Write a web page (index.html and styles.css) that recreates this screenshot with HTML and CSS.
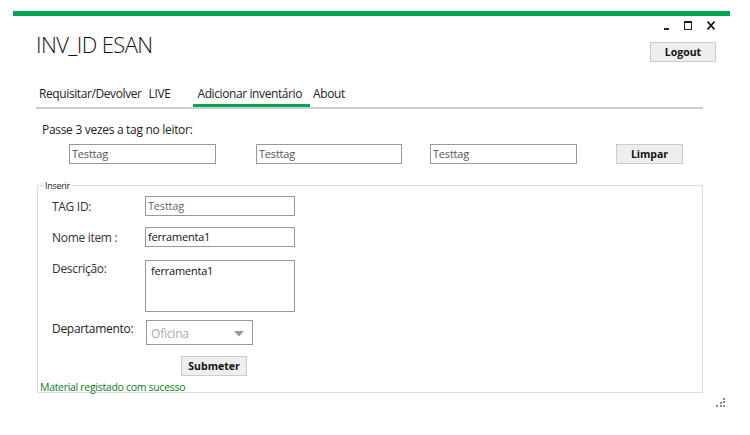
FILE: index.html
```html
<!DOCTYPE html>
<html lang="pt">
<head>
<meta charset="utf-8">
<title>INV_ID ESAN</title>
<link rel="stylesheet" href="styles.css">
</head>
<body>
<div class="window">
  <div class="header">
    <h1 class="title">INV_ID ESAN</h1>
    <div class="header-right">
      <div class="controls">
        <span class="ctl-min"></span>
        <span class="ctl-max"></span>
        <svg class="ctl-close" width="8" height="9" viewBox="0 0 8 9"><path d="M0.5 0.5 L7.5 8.5 M7.5 0.5 L0.5 8.5" stroke="#111" stroke-width="1.6" fill="none"/></svg>
      </div>
      <button class="btn btn-logout">Logout</button>
    </div>
  </div>

  <div class="content">
    <nav class="tabs">
      <span class="tab tab-req">Requisitar/Devolver</span>
      <span class="tab tab-live">LIVE</span>
      <span class="tab tab-add active">Adicionar inventário</span>
      <span class="tab tab-about">About</span>
    </nav>

    <p class="hint">Passe 3 vezes a tag no leitor:</p>
    <div class="tag-row">
      <div class="field f1">Testtag</div>
      <div class="field f2">Testtag</div>
      <div class="field f3">Testtag</div>
      <button class="btn btn-limpar">Limpar</button>
    </div>

    <div class="group">
      <span class="legend">Inserir</span>
      <div class="row row-tag">
        <span class="label">TAG ID:</span>
        <div class="field wide muted">Testtag</div>
      </div>
      <div class="row row-nome">
        <span class="label">Nome item :</span>
        <div class="field wide dark">ferramenta1</div>
      </div>
      <div class="row row-desc">
        <span class="label">Descrição:</span>
        <div class="field area dark">ferramenta1</div>
      </div>
      <div class="row row-dep">
        <span class="label label-dep">Departamento:</span>
        <div class="select">
          <span>Oficina</span>
          <svg width="10" height="6" viewBox="0 0 10 6"><path d="M0 0 H10 L5 5.5 Z" fill="#999"/></svg>
        </div>
      </div>
      <div class="row-submit">
        <button class="btn btn-submit">Submeter</button>
      </div>
      <p class="msg">Material registado com sucesso</p>
    </div>
  </div>

  <svg class="grip" width="10" height="10" viewBox="0 0 10 10">
    <rect x="7" y="0" width="2" height="2" fill="#888"/>
    <rect x="7" y="3" width="2" height="2" fill="#888"/>
    <rect x="4" y="4" width="2" height="2" fill="#888"/>
    <rect x="0" y="7" width="2" height="2" fill="#888"/>
    <rect x="4" y="7" width="2" height="2" fill="#888"/>
    <rect x="7" y="7" width="2" height="2" fill="#888"/>
  </svg>
</div>
</body>
</html>
```

FILE: styles.css
```css
html, body {
  margin: 0;
  padding: 0;
  background: #fff;
}
body {
  width: 750px;
  height: 435px;
  padding-top: 11px;
  box-sizing: border-box;
  font-family: "Open Sans", "Noto Sans", sans-serif;
  color: #222;
  overflow: hidden;
}
.window {
  position: relative;
  margin-left: 13px;
  width: 717px;
  height: 424px;
  border-top: 5px solid #00a651;
  box-sizing: border-box;
}
.header {
  display: flex;
  justify-content: space-between;
  padding-left: 23px;
  padding-right: 14px;
}
.title {
  margin: 13px 0 0 0;
  font-weight: 300;
  font-size: 22px;
  line-height: 30px;
  color: #111;
  letter-spacing: -0.6px;
}
.header-right {
  display: flex;
  flex-direction: column;
  align-items: flex-end;
}
.controls {
  display: flex;
  align-items: flex-end;
  height: 9px;
  margin-top: 5px;
  padding-right: 1px;
}
.ctl-min {
  width: 5px;
  height: 2px;
  background: #222;
  margin-right: 15px;
}
.ctl-max {
  width: 8px;
  height: 9px;
  box-sizing: border-box;
  border: 1px solid #222;
  border-top-width: 2px;
  margin-right: 15px;
}
.ctl-close {
  display: block;
}
.btn {
  font-family: "Open Sans", "Noto Sans", sans-serif;
  font-weight: 700;
  font-size: 10.5px;
  color: #111;
  background: #eeeeee;
  border: 1px solid #cccccc;
  padding: 0;
  height: 20px;
  box-sizing: border-box;
}
.btn-logout {
  width: 66px;
  margin-top: 12px;
}
.content {
  margin-left: 23px;
  width: 667px;
}
.tabs {
  display: flex;
  margin-top: 21px;
  height: 24px;
  border-bottom: 2px solid #cccccc;
  font-size: 12px;
  color: #222;
}
.tab {
  line-height: 17px;
  padding: 2px 0 0 0;
  letter-spacing: -0.4px;
  box-sizing: border-box;
}
.tab-req { margin-left: 3px; }
.tab-live { margin-left: 7px; }
.tab-add { margin-left: 23px; }
.tab-about { margin-left: 3px; }
.tab.active {
  padding: 2px 8px 0 4px;
  border-bottom: 3px solid #00a651;
  margin-bottom: -2px;
  height: 24px;
}
.hint {
  margin: 13px 0 0 6px;
  font-size: 12px;
  line-height: 16px;
  color: #222;
  letter-spacing: -0.3px;
}
.tag-row {
  display: flex;
  margin-top: 6px;
}
.field {
  height: 20px;
  box-sizing: border-box;
  border: 1px solid #999999;
  font-size: 11px;
  line-height: 17px;
  padding-left: 2px;
  color: #555;
  letter-spacing: -0.2px;
}
.f1 { width: 147px; margin-left: 33px; }
.f2 { width: 146px; margin-left: 40px; }
.f3 { width: 147px; margin-left: 28px; }
.btn-limpar { width: 67px; margin-left: 39px; }
.group {
  position: relative;
  margin-top: 21px;
  margin-left: 1px;
  width: 666px;
  height: 208px;
  box-sizing: border-box;
  border: 1px solid #dddddd;
}
.legend {
  position: absolute;
  top: -6px;
  left: 6px;
  padding: 0 1px;
  background: #fff;
  font-size: 9px;
  line-height: 11px;
  color: #222;
  letter-spacing: -0.3px;
}
.row {
  display: flex;
  padding-left: 14px;
}
.label {
  width: 93px;
  font-size: 12px;
  line-height: 16px;
  color: #333;
  letter-spacing: -0.3px;
}
.row-tag { margin-top: 10px; }
.row-tag .label { margin-top: 3px; }
.row-nome { margin-top: 11px; }
.row-nome .label { margin-top: 3px; }
.row-desc { margin-top: 13px; }
.row-desc .label { margin-top: 1px; }
.row-dep { margin-top: 8px; }
.row-dep .label { margin-top: 1px; color: #222; }
.wide { width: 150px; }
.muted { color: #666; }
.dark { color: #111; }
.area {
  width: 150px;
  height: 52px;
  padding-left: 5px;
  padding-top: 1px;
}
.select {
  width: 107px;
  height: 25px;
  margin-left: 1px;
  box-sizing: border-box;
  border: 1px solid #999999;
  display: flex;
  align-items: center;
  justify-content: space-between;
  padding: 2px 8px 0 4px;
  font-size: 12px;
  color: #aaaaaa;
  letter-spacing: -0.2px;
}
.row-submit {
  margin-top: 8px;
  padding-left: 143px;
}
.btn-submit { width: 66px; }
.msg {
  margin: 4px 0 0 2px;
  font-size: 10.5px;
  line-height: 14px;
  color: #0a7d1e;
  letter-spacing: -0.3px;
}
.grip {
  position: absolute;
  left: 703px;
  top: 382px;
}
```
